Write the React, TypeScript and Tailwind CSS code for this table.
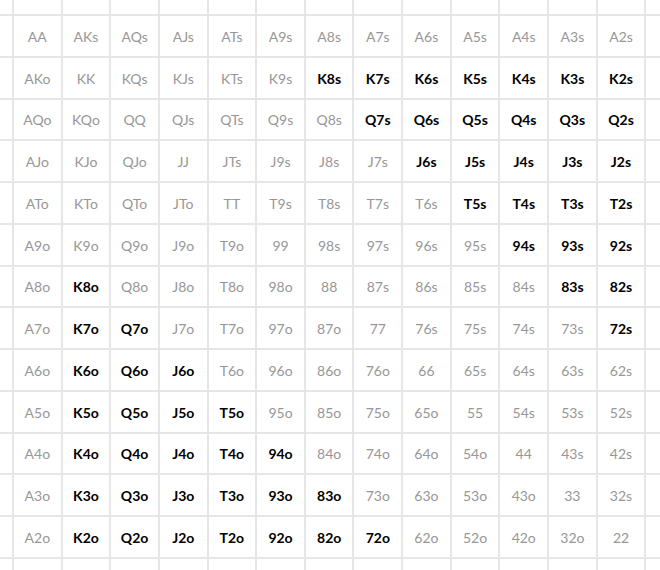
import React from 'react';

const RANKS = ['A', 'K', 'Q', 'J', 'T', '9', '8', '7', '6', '5', '4', '3', '2'];

// hands shown in bold black, everything else is grey
const BOLD = new Set([
  'K8s', 'K7s', 'K6s', 'K5s', 'K4s', 'K3s', 'K2s',
  'Q7s', 'Q6s', 'Q5s', 'Q4s', 'Q3s', 'Q2s',
  'J6s', 'J5s', 'J4s', 'J3s', 'J2s',
  'T5s', 'T4s', 'T3s', 'T2s',
  '94s', '93s', '92s',
  '83s', '82s',
  '72s',
  'K8o',
  'K7o', 'Q7o',
  'K6o', 'Q6o', 'J6o',
  'K5o', 'Q5o', 'J5o', 'T5o',
  'K4o', 'Q4o', 'J4o', 'T4o', '94o',
  'K3o', 'Q3o', 'J3o', 'T3o', '93o', '83o',
  'K2o', 'Q2o', 'J2o', 'T2o', '92o', '82o', '72o',
]);

const handName = (i: number, j: number) => {
  if (i === j) return RANKS[i] + RANKS[j];
  if (j > i) return RANKS[i] + RANKS[j] + 's';
  return RANKS[j] + RANKS[i] + 'o';
};

const Blank: React.FC = () => <div className="bg-white" />;

const App: React.FC = () => {
  return (
    <div
      className="w-[660px] h-[570px] overflow-hidden bg-[#e6e6e6] grid gap-[2px] grid-cols-[12px_repeat(13,46.65px)_1fr] grid-rows-[14px_repeat(13,39.75px)_1fr]"
      style={{ fontFamily: 'Lato, "Open Sans", sans-serif' }}
    >
      {/* top partial row */}
      {Array.from({ length: 15 }).map((_, k) => <Blank key={'t' + k} />)}

      {RANKS.map((_, i) => (
        <React.Fragment key={i}>
          <Blank />
          {RANKS.map((__, j) => {
            const name = handName(i, j);
            const bold = BOLD.has(name);
            return (
              <div
                key={j}
                className={`bg-white flex items-center justify-center pt-px text-[14px] ${
                  bold ? 'font-bold text-black' : 'text-[#979797]'
                }`}
              >
                {name}
              </div>
            );
          })}
          <Blank />
        </React.Fragment>
      ))}

      {/* bottom partial row */}
      {Array.from({ length: 15 }).map((_, k) => <Blank key={'b' + k} />)}
    </div>
  );
};

export default App;
